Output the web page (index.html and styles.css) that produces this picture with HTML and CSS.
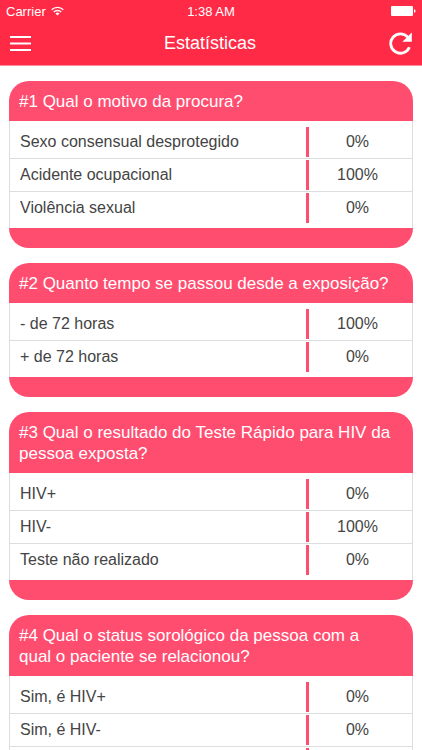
FILE: index.html
```html
<!DOCTYPE html>
<html lang="pt-BR">
<head>
    <meta charset="UTF-8">
    <meta name="viewport" content="width=device-width, initial-scale=1.0">
    <title>Estatísticas</title>
    <link rel="stylesheet" href="styles.css">
</head>
<body>
    <header class="topo">
        <!-- Barra de status -->
        <div class="status">
            <div class="operadora">
                <span>Carrier</span>
                <svg width="13" height="10" viewBox="0 0 13 10" fill="none" stroke="#fff" stroke-width="1.4">
                    <path d="M0.7 3.8a8.2 8.2 0 0 1 11.6 0"/>
                    <path d="M2.8 6a5.2 5.2 0 0 1 7.4 0"/>
                    <path d="M6.5 9.6L4.5 7.5a2.8 2.8 0 0 1 4 0z" fill="#fff" stroke="none"/>
                </svg>
            </div>
            <span class="hora">1:38 AM</span>
            <svg class="bateria" width="25" height="10" viewBox="0 0 25 10" fill="#fff">
                <rect x="0" y="0" width="22" height="10" rx="1"/>
                <path d="M23 3.2c2 .4 2 3.2 0 3.6z"/>
            </svg>
        </div>

        <!-- Navegação -->
        <nav class="barra">
            <button class="botao" type="button" aria-label="Menu">
                <svg width="21" height="15" viewBox="0 0 21 15" fill="#fff">
                    <rect y="0" width="21" height="2"/>
                    <rect y="6.5" width="21" height="2"/>
                    <rect y="13" width="21" height="2"/>
                </svg>
            </button>
            <h1>Estatísticas</h1>
            <button class="botao" type="button" aria-label="Atualizar">
                <svg width="23" height="23" viewBox="0 0 23 23">
                    <path d="M20.4 15.2A9.7 9.7 0 1 1 18.8 5.2" fill="none" stroke="#fff" stroke-width="2.8"/>
                    <path d="M22.8 0.5v9.3h-9.4z" fill="#fff"/>
                </svg>
            </button>
        </nav>
    </header>

    <!-- Perguntas -->
    <main class="lista">
        <section class="cartao">
            <h2>#1 Qual o motivo da procura?</h2>
            <table>
                <tr><th scope="row">Sexo consensual desprotegido</th><td><span class="valor">0%</span></td></tr>
                <tr><th scope="row">Acidente ocupacional</th><td><span class="valor">100%</span></td></tr>
                <tr><th scope="row">Violência sexual</th><td><span class="valor">0%</span></td></tr>
            </table>
        </section>

        <section class="cartao">
            <h2>#2 Quanto tempo se passou desde a exposição?</h2>
            <table>
                <tr><th scope="row">- de 72 horas</th><td><span class="valor">100%</span></td></tr>
                <tr><th scope="row">+ de 72 horas</th><td><span class="valor">0%</span></td></tr>
            </table>
        </section>

        <section class="cartao">
            <h2>#3 Qual o resultado do Teste Rápido para HIV da pessoa exposta?</h2>
            <table>
                <tr><th scope="row">HIV+</th><td><span class="valor">0%</span></td></tr>
                <tr><th scope="row">HIV-</th><td><span class="valor">100%</span></td></tr>
                <tr><th scope="row">Teste não realizado</th><td><span class="valor">0%</span></td></tr>
            </table>
        </section>

        <section class="cartao">
            <h2>#4 Qual o status sorológico da pessoa com a qual o paciente se relacionou?</h2>
            <table>
                <tr><th scope="row">Sim, é HIV+</th><td><span class="valor">0%</span></td></tr>
                <tr><th scope="row">Sim, é HIV-</th><td><span class="valor">0%</span></td></tr>
                <tr><th scope="row"></th><td><span class="valor"></span></td></tr>
            </table>
        </section>
    </main>
</body>
</html>
```
FILE: styles.css
```css
* {
    margin: 0;
    padding: 0;
    box-sizing: border-box;
}

html {
    height: 100%;
    overflow: hidden;
}

body {
    font-family: "Liberation Sans", Arial, sans-serif;
    background-color: #fff;
    color: #444;
    height: 100%;
    display: flex;
    flex-direction: column;
}

/* Topo */
.topo {
    flex: none;
    background-color: #ff2a46;
    color: #fff;
    border-bottom: 1px solid #ff8a9a;
}

.status {
    display: grid;
    grid-template-columns: 1fr auto 1fr;
    align-items: center;
    height: 22px;
    padding: 0 6px;
    font-size: 13px;
}

.operadora {
    display: flex;
    align-items: center;
    gap: 5px;
}

.bateria {
    justify-self: end;
}

.barra {
    display: flex;
    align-items: center;
    justify-content: space-between;
    height: 43px;
    padding: 0 10px;
}

.barra h1 {
    font-size: 18px;
    font-weight: normal;
}

.botao {
    display: flex;
    background: none;
    border: none;
    color: inherit;
    cursor: pointer;
}

/* Lista de perguntas */
.lista {
    flex: 1;
    overflow: hidden;
    padding: 15px 9px;
}

.cartao {
    margin-bottom: 15px;
    border-radius: 20px;
    border-bottom: 20px solid #ff4d70;
    overflow: hidden;
}

.cartao h2 {
    background-color: #ff4d70;
    color: #fff;
    font-size: 17px;
    font-weight: normal;
    line-height: 21px;
    padding: 10px 20px 9px 10px;
}

table {
    display: block;
    border: solid #ddd;
    border-width: 0 1px;
    padding: 5px 0;
}

tbody {
    display: block;
}

tr {
    display: flex;
    align-items: center;
    border-bottom: 1px solid #ddd;
    padding: 1px 6px 1px 10px;
}

tr:last-child {
    border-bottom: none;
    padding-bottom: 0;
}

th {
    flex: 1;
    text-align: left;
    font-size: 16px;
    font-weight: normal;
}

td {
    width: 100px;
}

.valor {
    display: block;
    min-height: 30px;
    border-left: 3px solid #ff4d70;
    text-align: center;
    font-size: 16px;
    line-height: 30px;
}
```
